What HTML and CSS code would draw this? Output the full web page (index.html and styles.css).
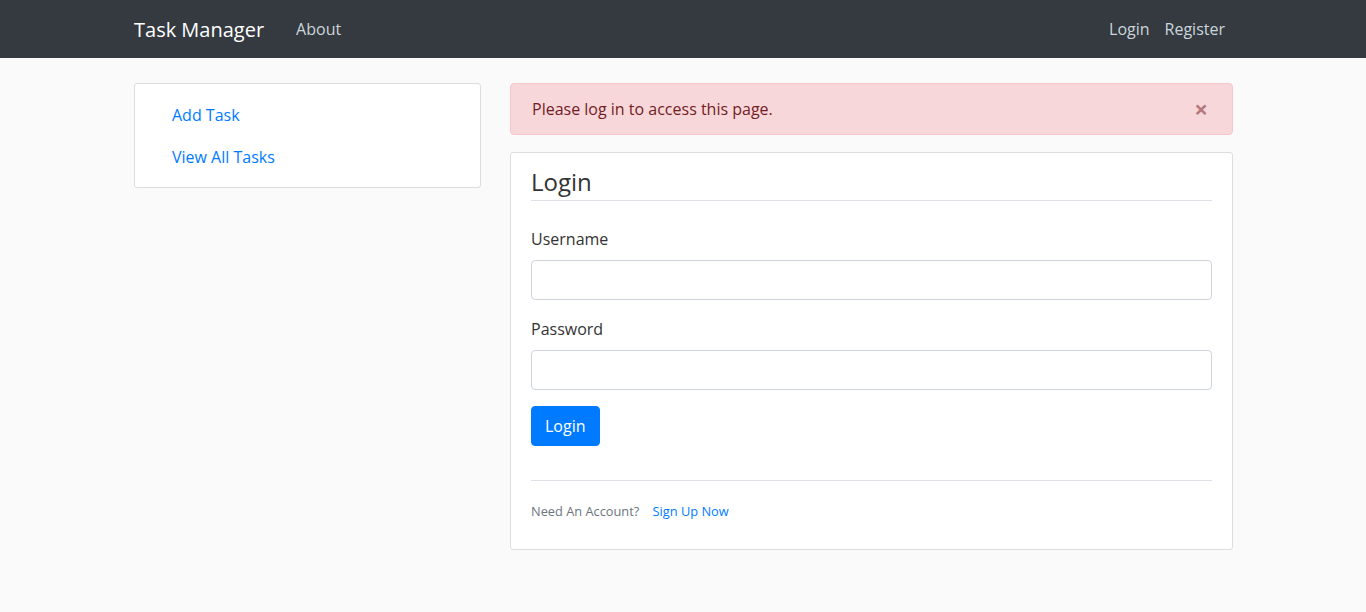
FILE: index.html
```html
<!DOCTYPE html>
<html>
<head>
  <meta charset="UTF-8">
  <title>Login</title>
  <link rel="stylesheet" href="styles.css">
</head>
<body>
  <header class="site-header">
    <nav class="navbar">
      <a class="navbar-brand" href="#">Task Manager</a>
      <div class="navbar-nav">
        <a class="nav-link" href="#">About</a>
      </div>
      <div class="navbar-nav nav-right">
        <a class="nav-link" href="#">Login</a>
        <a class="nav-link" href="#">Register</a>
      </div>
    </nav>
  </header>

  <main class="container">
    <aside class="sidebar">
      <ul class="side-links">
        <li><a href="#">Add Task</a></li>
        <li><a href="#">View All Tasks</a></li>
      </ul>
    </aside>

    <div class="content">
      <div class="alert">
        <span>Please log in to access this page.</span>
        <button class="close" type="button">&times;</button>
      </div>

      <div class="content-section">
        <form>
          <fieldset>
            <legend>Login</legend>
            <div class="form-group">
              <label for="username">Username</label>
              <input class="form-control" id="username" type="text">
            </div>
            <div class="form-group">
              <label for="password">Password</label>
              <input class="form-control" id="password" type="password">
            </div>
          </fieldset>
          <button class="btn" type="submit">Login</button>
        </form>
        <div class="border-top">
          <small class="text-muted">Need An Account? <a class="ml-2" href="#">Sign Up Now</a></small>
        </div>
      </div>
    </div>
  </main>
</body>
</html>
```

FILE: styles.css
```css
* {
    box-sizing: border-box;
}
body {
    margin: 0;
    background: #fafafa;
    color: #333333;
    font-family: "Open Sans", "Noto Sans", sans-serif;
    font-size: 16px;
}
a {
    text-decoration: none;
    color: #007bff;
}
.site-header {
    background-color: #343a40;
}
.navbar {
    width: 1100px;
    height: 58px;
    margin: 0 auto;
    padding-left: 1px;
    display: flex;
    align-items: center;
}
.navbar-brand {
    color: #fff;
    font-size: 20px;
    margin-right: 24px;
}
.navbar-nav {
    display: flex;
}
.nav-right {
    margin-left: auto;
}
.nav-link {
    color: #cbd5db;
    padding: 0 8px;
}
.nav-right .nav-link + .nav-link {
    margin-left: -1px;
}
.container {
    width: 1100px;
    margin: 25px auto;
    padding-left: 1px;
    display: grid;
    grid-template-columns: 347px 723px;
    column-gap: 29px;
    align-items: start;
}
.sidebar {
    background: #fff;
    border: 1px solid #dddddd;
    border-radius: 3px;
    height: 105px;
}
.side-links {
    list-style: none;
    margin: 0;
    padding: 19px 0 0 37px;
}
.side-links li {
    line-height: 24px;
    margin-bottom: 18px;
}
.alert {
    display: flex;
    align-items: center;
    justify-content: space-between;
    height: 52px;
    padding: 0 20px 0 21px;
    margin-bottom: 17px;
    background: #f8d7da;
    border: 1px solid #f5c6cb;
    border-radius: 4px;
    color: #721c24;
}
.close {
    border: 0;
    background: none;
    padding: 0 4px;
    font-family: inherit;
    font-size: 24px;
    font-weight: 700;
    line-height: 1;
    color: #721c24;
    opacity: .5;
}
.content-section {
    background: #fff;
    border: 1px solid #dddddd;
    border-radius: 3px;
    padding: 10px 20px 0;
    height: 398px;
}
fieldset {
    border: 0;
    margin: 0;
    padding: 0;
}
legend {
    width: 100%;
    padding: 0;
    font-size: 24px;
    line-height: 37px;
    border-bottom: 1px solid #dee2e6;
    margin-bottom: 26px;
}
.form-group {
    margin-bottom: 17px;
}
.form-group:last-child {
    margin-bottom: 16px;
}
label {
    display: block;
    line-height: 24px;
    margin-bottom: 9px;
}
.form-control {
    display: block;
    width: 100%;
    height: 40px;
    padding: 6px 12px;
    font-size: 16px;
    border: 1px solid #ced4da;
    border-radius: 4px;
    background: #fff;
}
.btn {
    display: block;
    height: 40px;
    padding: 0 13px;
    font-family: inherit;
    font-size: 16px;
    color: #fff;
    background: #007bff;
    border: 1px solid #007bff;
    border-radius: 4px;
}
.border-top {
    margin-top: 34px;
    border-top: 1px solid #dee2e6;
    padding-top: 18px;
}
.text-muted {
    color: #6c757d;
    font-size: 12.8px;
}
.ml-2 {
    margin-left: 10px;
}
```
